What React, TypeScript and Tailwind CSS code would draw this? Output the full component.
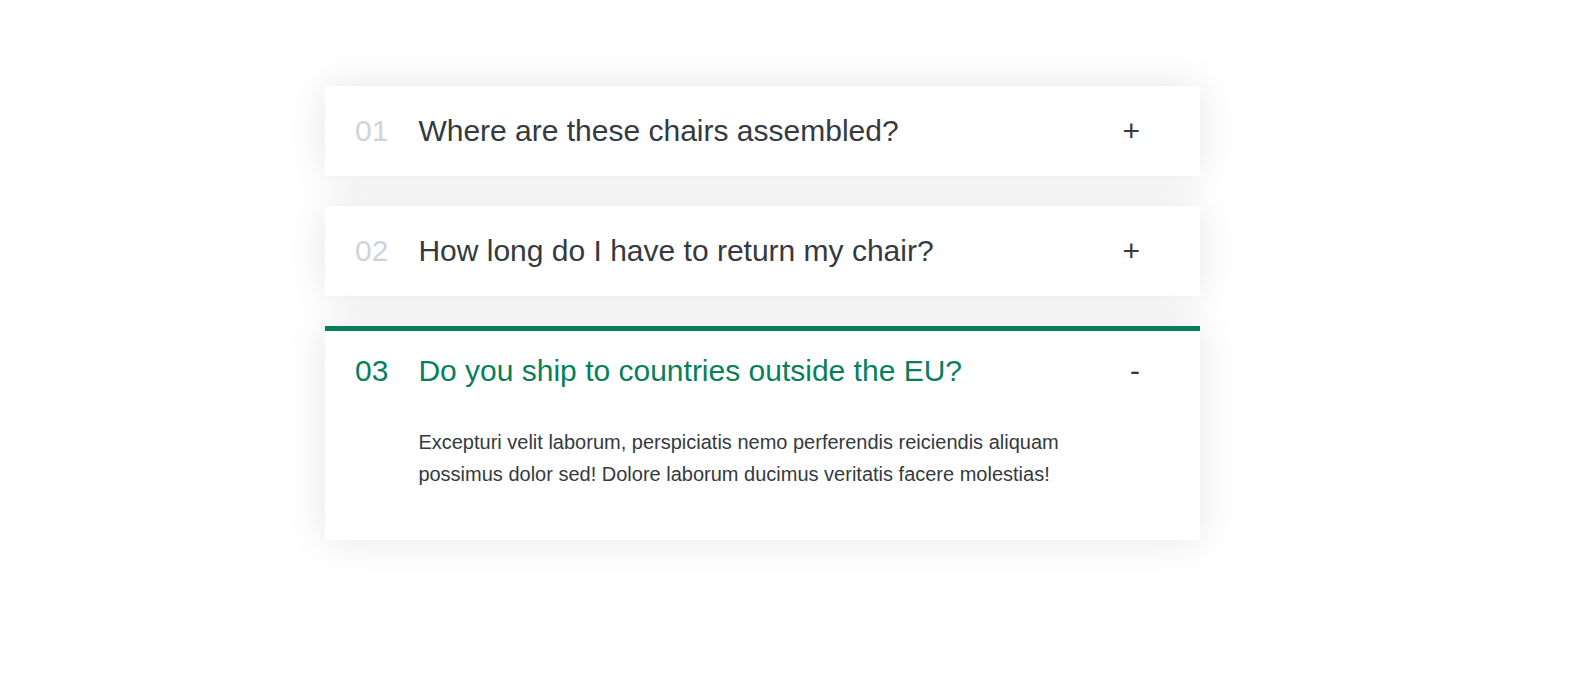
const faqs = [
  { num: "01", title: "Where are these chairs assembled?", text: "" },
  { num: "02", title: "How long do I have to return my chair?", text: "" },
  {
    num: "03",
    title: "Do you ship to countries outside the EU?",
    text: "Excepturi velit laborum, perspiciatis nemo perferendis reiciendis aliquam possimus dolor sed! Dolore laborum ducimus veritatis facere molestias!",
  },
];

function Item({ num, title, text, open }: { num: string; title: string; text: string; open: boolean }) {
  return (
    <div
      className={
        "grid grid-cols-[auto_1fr_auto] items-center gap-x-[30px] gap-y-[40px] bg-white pl-[30px] pr-[60px] pt-[25px] pb-[25px] border-t-[5px] border-b-[5px] border-b-white shadow-[0_0_40px_rgba(0,0,0,0.1)] cursor-pointer " +
        (open ? "border-t-[#087f5b]" : "border-t-white")
      }
    >
      <p className={"text-[30px] leading-[30px] " + (open ? "text-[#087f5b]" : "text-[#ced4da]")}>{num}</p>
      <p className={"text-[30px] leading-[30px] " + (open ? "text-[#087f5b]" : "text-[#343a40]")}>{title}</p>
      <p className="text-[30px] leading-[30px] text-[#343a40]">{open ? "-" : "+"}</p>
      {open && (
        <div className="col-[2/-1]">
          <p className="text-[20px] leading-[32px] text-[#343a40] mb-[20px]">{text}</p>
        </div>
      )}
    </div>
  );
}

export default function App() {
  return (
    <div className="min-h-screen bg-white font-['Liberation_Sans',Arial,sans-serif] pt-[86px]">
      <div className="ml-[325px] w-[875px] flex flex-col gap-[30px]">
        {faqs.map((f, i) => (
          <Item key={f.num} {...f} open={i === 2} />
        ))}
      </div>
    </div>
  );
}
